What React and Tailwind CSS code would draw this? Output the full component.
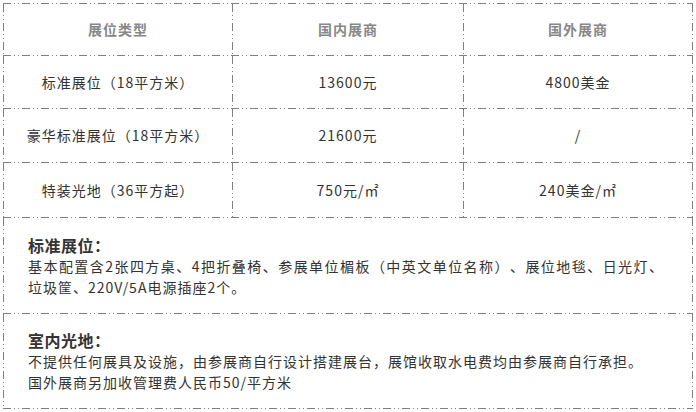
import React from "react";

const H = () => (
  <div className="h-px w-full shrink-0 bg-[repeating-linear-gradient(90deg,#808080_0_8px,transparent_8px_11px,#808080_11px_12px,transparent_12px_15px,#808080_15px_16px,transparent_16px_19px)]" />
);
const V = () => (
  <div className="w-px self-stretch shrink-0 bg-[repeating-linear-gradient(180deg,#808080_0_8px,transparent_8px_11px,#808080_11px_12px,transparent_12px_15px,#808080_15px_16px,transparent_16px_19px)]" />
);

function Row({ h, cells, head }) {
  const c = head ? "font-bold text-[#888888]" : "text-[#333333]";
  return (
    <div className={`flex ${h}`}>
      <V />
      <div className={`w-[228px] flex items-center justify-center ${c}`}>{cells[0]}</div>
      <V />
      <div className={`w-[230px] flex items-center justify-center ${c}`}>{cells[1]}</div>
      <V />
      <div className={`w-[228px] flex items-center justify-center ${c}`}>{cells[2]}</div>
      <V />
    </div>
  );
}

function Box({ h, title, lines }) {
  return (
    <div className={`flex ${h}`}>
      <V />
      <div className="flex-1 flex flex-col justify-center pl-[24px] text-[#333333]">
        <div className="text-[16px] font-bold leading-[22px] tracking-[0.5px]">{title}</div>
        {lines.map((l, i) => (
          <div key={i} className={`whitespace-nowrap leading-[21px] ${l.wide ? "tracking-[1.45px]" : ""}`}>{l.t}</div>
        ))}
      </div>
      <V />
    </div>
  );
}

export default function App() {
  return (
    <div className="w-[696px] h-[412px] bg-white pt-[3px] pl-[3px] font-['Noto_Sans_CJK_SC','Noto_Sans',sans-serif] text-[14px] tracking-[1px] [text-spacing-trim:space-all]">
      <div className="w-[690px] flex flex-col">
        <H />
        <Row h="h-[51px]" head cells={["展位类型", "国内展商", "国外展商"]} />
        <H />
        <Row h="h-[52px]" cells={["标准展位（18平方米）", "13600元", "4800美金"]} />
        <H />
        <Row h="h-[53px]" cells={["豪华标准展位（18平方米）", "21600元", "/"]} />
        <H />
        <Row h="h-[54px]" cells={["特装光地（36平方起）", "750元/㎡", "240美金/㎡"]} />
        <H />
        <Box
          h="h-[95px]"
          title="标准展位："
          lines={[
            { t: "基本配置含2张四方桌、4把折叠椅、参展单位楣板（中英文单位名称）、展位地毯、日光灯、", wide: true },
            { t: "垃圾筐、220V/5A电源插座2个。" },
          ]}
        />
        <H />
        <Box
          h="h-[94px]"
          title="室内光地："
          lines={[
            { t: "不提供任何展具及设施，由参展商自行设计搭建展台，展馆收取水电费均由参展商自行承担。" },
            { t: "国外展商另加收管理费人民币50/平方米" },
          ]}
        />
        <H />
      </div>
    </div>
  );
}
